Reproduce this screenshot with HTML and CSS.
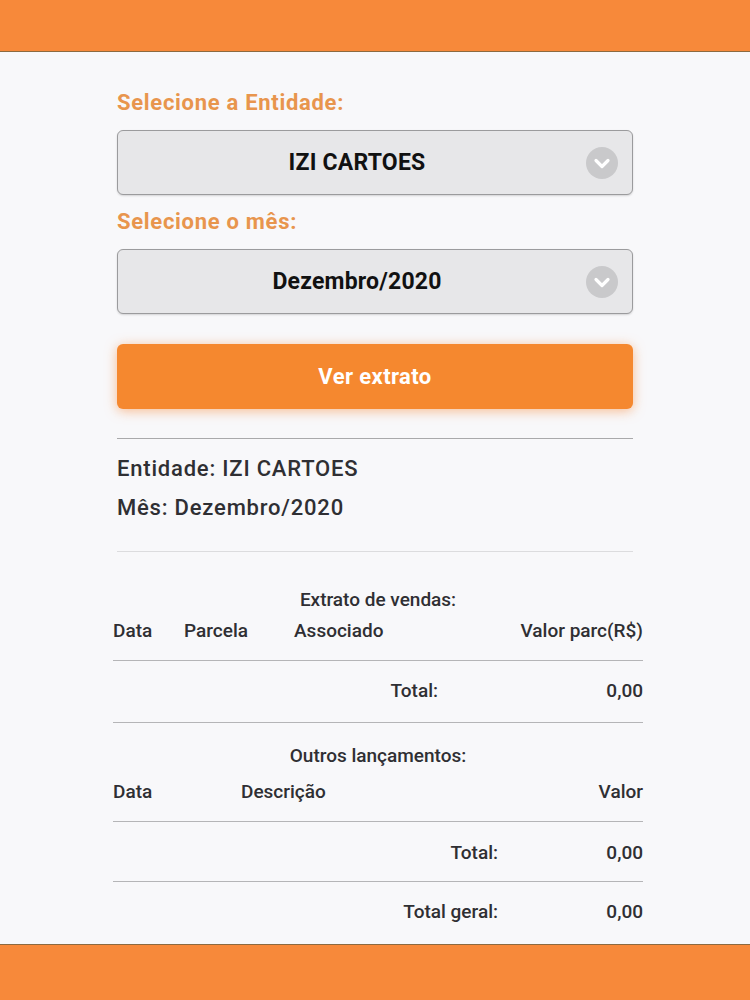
FILE: index.html
```html
<!DOCTYPE html>
<html lang="pt-BR">
<head>
<meta charset="utf-8">
<title>Extrato</title>
<link rel="stylesheet" href="styles.css">
</head>
<body>
<div class="page">
  <header class="topbar"></header>
  <main class="content">
    <div class="form">
      <label class="label">Selecione a Entidade:</label>
      <div class="select">
        <span class="select-text">IZI CARTOES</span>
        <span class="chev"><svg width="32" height="32" viewBox="0 0 32 32"><circle cx="16" cy="16" r="16" fill="#c9c9cb"/><path d="M10 13.5 L16 19.5 L22 13.5" fill="none" stroke="#fff" stroke-width="3.2" stroke-linecap="round" stroke-linejoin="round"/></svg></span>
      </div>
      <label class="label label2">Selecione o mês:</label>
      <div class="select">
        <span class="select-text">Dezembro/2020</span>
        <span class="chev"><svg width="32" height="32" viewBox="0 0 32 32"><circle cx="16" cy="16" r="16" fill="#c9c9cb"/><path d="M10 13.5 L16 19.5 L22 13.5" fill="none" stroke="#fff" stroke-width="3.2" stroke-linecap="round" stroke-linejoin="round"/></svg></span>
      </div>
      <button class="btn">Ver extrato</button>
      <hr class="hr1">
      <div class="info">
        <div>Entidade: IZI CARTOES</div>
        <div>Mês: Dezembro/2020</div>
      </div>
      <hr class="hr2">
    </div>
    <div class="tables">
      <div class="title t1">Extrato de vendas:</div>
      <div class="row head grid4">
        <span>Data</span><span>Parcela</span><span>Associado</span><span class="r">Valor parc(R$)</span>
      </div>
      <div class="row tot grid4b">
        <span class="r">Total:</span><span class="r">0,00</span>
      </div>
      <div class="title t2">Outros lançamentos:</div>
      <div class="row head2 grid3">
        <span>Data</span><span>Descrição</span><span class="r">Valor</span>
      </div>
      <div class="row tot2 grid3b">
        <span class="r">Total:</span><span class="r">0,00</span>
      </div>
      <div class="row totg grid3b">
        <span class="r">Total geral:</span><span class="r">0,00</span>
      </div>
    </div>
  </main>
  <footer class="bottombar"></footer>
</div>
</body>
</html>
```
FILE: styles.css
```css
* { box-sizing: border-box; }
html, body { margin: 0; padding: 0; }
body {
  font-family: Roboto, "Liberation Sans", Arial, sans-serif;
  background: #f8f8fa;
  color: #2f2f33;
}
.page {
  width: 750px;
  height: 1000px;
  display: flex;
  flex-direction: column;
  overflow: hidden;
}
.topbar {
  height: 52px;
  background: #f7893a;
  border-bottom: 1px solid #8c6a40;
  flex: none;
}
.content { flex: 1; }
.bottombar {
  height: 56px;
  background: #f7893a;
  border-top: 1px solid #8c6a40;
  flex: none;
}
.form {
  width: 516px;
  margin: 0 0 0 117px;
  padding-top: 39px;
  display: flex;
  flex-direction: column;
}
.label {
  display: block;
  color: #e8954d;
  font-size: 22px;
  letter-spacing: 0.7px;
  font-weight: 700;
  line-height: 24px;
  height: 24px;
}
.label2 { margin-top: 15px; }
.select {
  margin-top: 15px;
  height: 65px;
  padding-right: 36px;
  background: #e7e7e9;
  border: 1px solid #9b9b9d;
  border-radius: 6px;
  box-shadow: 0 1px 2px rgba(0,0,0,0.15);
  display: flex;
  align-items: center;
  justify-content: center;
  position: relative;
}
.select-text {
  font-size: 23px;
  letter-spacing: 0.2px;
  font-weight: 700;
  color: #111;
}
.chev {
  position: absolute;
  right: 14px;
  top: 50%;
  margin-top: -16px;
  width: 32px;
  height: 32px;
  display: block;
}
.chev svg { display: block; }
.btn {
  margin-top: 30px;
  height: 65px;
  border: none;
  border-radius: 6px;
  background: #f5882f;
  color: #fff;
  font-family: Roboto, "Liberation Sans", Arial, sans-serif;
  font-size: 22px;
  letter-spacing: 0.4px;
  font-weight: 700;
  box-shadow: 0 2px 12px rgba(247,137,58,0.55);
  padding: 0;
}
.hr1 {
  margin: 29px 0 0 0;
  border: none;
  border-top: 1px solid #a9a9ab;
  height: 0;
}
.info {
  margin-top: 10px;
  font-size: 22px;
  letter-spacing: 0.8px;
  font-weight: 500;
  line-height: 39px;
  color: #2f2f33;
}
.hr2 {
  margin: 24px 0 0 0;
  border: none;
  border-top: 1px solid #dcdcde;
  height: 0;
}
.tables {
  width: 530px;
  margin-left: 113px;
  font-size: 19px;
  font-weight: 500;
  color: #2f2f33;
}
.title {
  text-align: center;
  line-height: 24px;
  height: 24px;
}
.t1 { margin-top: 36px; }
.t2 { margin-top: 21px; }
.row {
  line-height: 24px;
  display: grid;
}
.row span { white-space: nowrap; }
.r { text-align: right; }
.grid4 { grid-template-columns: 71px 110px 150px 1fr; }
.grid4b { grid-template-columns: 325px 1fr; }
.grid3 { grid-template-columns: 128px 257px 1fr; }
.grid3b { grid-template-columns: 385px 1fr; }
.head {
  margin-top: 7px;
  padding-bottom: 17px;
  border-bottom: 1px solid #b5b5b7;
}
.tot {
  padding-top: 18px;
  padding-bottom: 19px;
  border-bottom: 1px solid #b5b5b7;
}
.head2 {
  margin-top: 12px;
  padding-bottom: 17px;
  border-bottom: 1px solid #b5b5b7;
}
.tot2 {
  padding-top: 19px;
  padding-bottom: 16px;
  border-bottom: 1px solid #b5b5b7;
}
.totg {
  padding-top: 18px;
}
```
